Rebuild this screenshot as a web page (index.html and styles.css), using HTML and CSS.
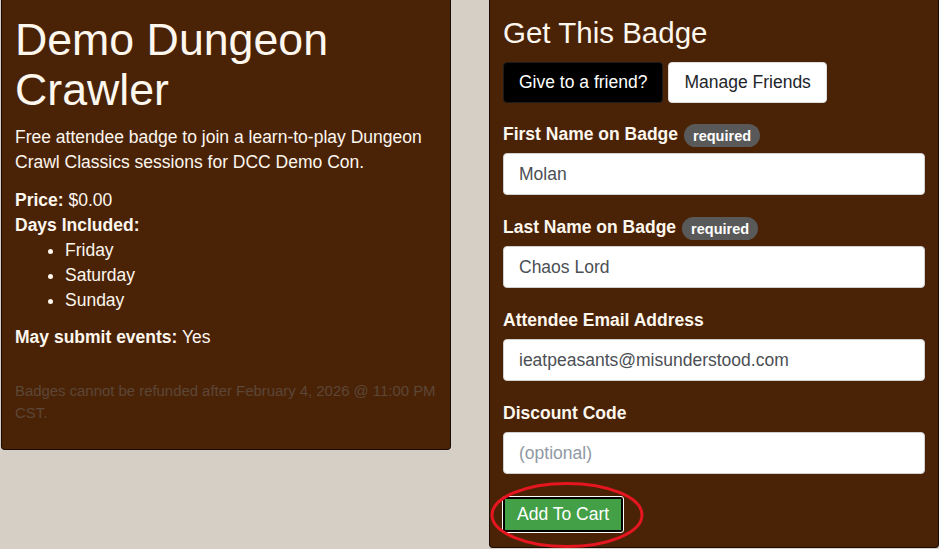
FILE: index.html
```html
<!DOCTYPE html>
<html lang="en">
<head>
<meta charset="utf-8">
<title>Demo Dungeon Crawler</title>
<link rel="stylesheet" href="styles.css">
</head>
<body>
<div class="page">
  <section class="card info">
    <h1 class="title">Demo Dungeon Crawler</h1>
    <p class="desc">Free attendee badge to join a learn-to-play Dungeon Crawl Classics sessions for DCC Demo Con.</p>
    <div class="line"><b>Price:</b> $0.00</div>
    <div class="line"><b>Days Included:</b></div>
    <ul class="days">
      <li>Friday</li>
      <li>Saturday</li>
      <li>Sunday</li>
    </ul>
    <div class="line"><b>May submit events:</b> Yes</div>
    <p class="refund">Badges cannot be refunded after February 4, 2026 @ 11:00 PM CST.</p>
  </section>
  <section class="card form">
    <h3 class="form-title">Get This Badge</h3>
    <div class="btn-row">
      <button class="btn btn-dark">Give to a friend?</button>
      <button class="btn btn-light">Manage Friends</button>
    </div>
    <div class="field">
      <label class="label">First Name on Badge <span class="badge">required</span></label>
      <input class="input" type="text" value="Molan">
    </div>
    <div class="field">
      <label class="label">Last Name on Badge <span class="badge">required</span></label>
      <input class="input" type="text" value="Chaos Lord">
    </div>
    <div class="field">
      <label class="label">Attendee Email Address</label>
      <input class="input" type="text" value="ieatpeasants@misunderstood.com">
    </div>
    <div class="field">
      <label class="label">Discount Code</label>
      <input class="input" type="text" placeholder="(optional)">
    </div>
    <div class="cart-wrap">
      <button class="btn btn-cart">Add To Cart</button>
      <svg class="circle" width="156" height="68" viewBox="0 0 156 68"><ellipse cx="78" cy="34" rx="75" ry="31.5" fill="none" stroke="#e5161f" stroke-width="3"/></svg>
    </div>
  </section>
</div>
</body>
</html>
```
FILE: styles.css
```css
* { box-sizing: border-box; }
html, body { margin: 0; padding: 0; }
body {
  background: #d6cfc5;
  font-family: "Liberation Sans", Arial, sans-serif;
  font-size: 17.5px;
  line-height: 25px;
  color: #fdf7ee;
  width: 939px;
  height: 549px;
  overflow: hidden;
}
.page {
  display: flex;
  align-items: flex-start;
  gap: 38px;
  padding-left: 1px;
}
.card {
  background: #4a2307;
  border: 1px solid #1a0c02;
  border-top: none;
  border-radius: 0 0 4px 4px;
  width: 450px;
}
.info {
  height: 450px;
  padding: 15px 13px 0 13px;
}
.title {
  font-size: 44.7px;
  line-height: 50px;
  font-weight: normal;
  margin: 0 0 10px 0;
}
.desc { margin: 0 0 13px 0; }
.line b { font-weight: bold; }
.days {
  margin: 0;
  padding-left: 50px;
}
.days li { line-height: 25px; }
.line + .days + .line { margin-top: 12px; }
.refund {
  margin: 30px 0 0 0;
  font-size: 14.9px;
  line-height: 22px;
  color: #5c4636;
}
.form {
  height: 548px;
  padding: 15px 13px 0 13px;
}
.form-title {
  font-size: 29.5px;
  line-height: 36px;
  font-weight: normal;
  margin: 0 0 11px 0;
}
.btn-row {
  display: flex;
  gap: 5px;
  margin-bottom: 19px;
}
.btn {
  font-family: "Liberation Sans", Arial, sans-serif;
  font-size: 17.5px;
  line-height: 25px;
  height: 41px;
  padding: 7px 15px;
  border: 1px solid transparent;
  border-radius: 4px;
  cursor: pointer;
}
.btn-dark { background: #000; color: #fff; border-color: #1c1c1c; }
.btn-light { background: #fff; color: #212529; border-color: #ddd; }
.field { margin-bottom: 20px; }
.label {
  display: flex;
  align-items: center;
  gap: 6px;
  font-weight: bold;
  height: 25px;
  margin-bottom: 6px;
}
.badge {
  display: inline-block;
  background: #595959;
  color: #fff;
  font-size: 14.5px;
  line-height: 17px;
  font-weight: bold;
  padding: 4px 9px 2px 9px;
  border-radius: 12px;
  margin-top: 2px;
}
.input {
  display: block;
  width: 100%;
  height: 42px;
  font-family: "Liberation Sans", Arial, sans-serif;
  font-size: 17.5px;
  color: #4b4f54;
  background: #fff;
  border: 1px solid #d0d0d0;
  border-radius: 4px;
  padding: 0 15px;
}
.input::placeholder { color: #8f99a3; }
.cart-wrap {
  position: relative;
  display: inline-block;
  margin-top: 3px;
}
.btn-cart {
  background: #43a047;
  color: #fff;
  border: 2px solid #000;
  outline: 1px solid #fff;
  height: 35px;
  padding: 3px 12px;
  border-radius: 2px;
}
.circle {
  position: absolute;
  left: -14px;
  top: -16px;
  pointer-events: none;
}
```
